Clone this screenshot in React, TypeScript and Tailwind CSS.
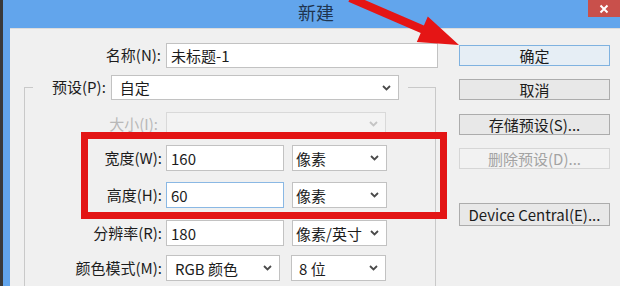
import React from "react";

const FONT = { fontFamily: '"Noto Sans CJK SC", "Noto Sans", sans-serif' };

function Chevron({ disabled }: { disabled?: boolean }) {
  return (
    <svg width="9" height="6" viewBox="0 0 9 6" className="shrink-0">
      <polyline
        points="1,1 4.5,4.5 8,1"
        fill="none"
        stroke={disabled ? "#c4c4c4" : "#4a4a4a"}
        strokeWidth="1.8"
      />
    </svg>
  );
}

function Select({
  text,
  w,
  pl = "pl-[5px]",
  disabled,
}: {
  text: string;
  w: string;
  pl?: string;
  disabled?: boolean;
}) {
  return (
    <div
      className={`${w} h-full flex items-center justify-between ${pl} pr-[7px] border ${
        disabled ? "border-[#d9d9d9] bg-[#f3f3f3]" : "border-[#c2c2c2] bg-white"
      }`}
    >
      <span className="leading-none">{text}</span>
      <Chevron disabled={disabled} />
    </div>
  );
}

function Input({ text, w, focused }: { text: string; w: string; focused?: boolean }) {
  return (
    <div
      className={`${w} h-full flex items-center pl-[4px] bg-white border ${
        focused ? "border-[#8ab8e4]" : "border-[#c2c2c2]"
      }`}
    >
      <span className="leading-none">{text}</span>
    </div>
  );
}

function Button({
  text,
  mt,
  h = "h-[21px]",
  primary,
  disabled,
}: {
  text: string;
  mt: string;
  h?: string;
  primary?: boolean;
  disabled?: boolean;
}) {
  return (
    <div
      className={`${mt} ${h} w-[151px] flex items-center justify-center border ${
        primary
          ? "border-[#7fb2e0] bg-[#e6eef5]"
          : disabled
          ? "border-[#d6d6d6] bg-[#f2f2f2] text-[#a3a3a3]"
          : "border-[#acacac] bg-[#e8e8e8]"
      }`}
    >
      <span className="leading-none">{text}</span>
    </div>
  );
}

export default function App() {
  return (
    <div
      className="w-[620px] h-[286px] overflow-hidden flex bg-[#3a3a3a] text-[15px] text-[#1c1c1c] relative"
      style={FONT}
    >
      <div className="w-[3px] shrink-0 bg-[#3a3a3a]" />
      <div className="flex-1 flex flex-col bg-[#62a5ec]">
        {/* title bar */}
        <div className="h-[28px] shrink-0 flex items-start">
          <span className="ml-[295px] mt-[1px] text-[18px] text-[#1f3550] leading-[22px]">
            新建
          </span>
          <div className="ml-auto w-[32px] h-[17px] bg-[#c9504b] flex items-center justify-center">
            <svg width="10" height="10" viewBox="0 0 10 10">
              <path d="M1.5 1.5 L8.5 8.5 M8.5 1.5 L1.5 8.5" stroke="#ffffff" strokeWidth="2" />
            </svg>
          </div>
        </div>
        {/* content */}
        <div className="flex-1 ml-[7px] bg-[#f0f0f0] border-t border-[#dcdcdc] flex relative">
          {/* left form */}
          <div className="w-[437px] shrink-0 flex flex-col">
            <div className="mt-[14px] h-[25px] flex items-center">
              <span className="w-[152px] text-right pr-[1px]">名称(N):</span>
              <div className="ml-[4px] h-full">
                <Input text="未标题-1" w="w-[272px]" />
              </div>
            </div>
            <fieldset className="mt-[7px] ml-[14px] w-[412px] border border-[#c9c9c9] pl-[8px] pb-[20px]">
              <legend className="pl-[19px] pr-[9px]">
                <div className="h-[25px] flex items-center">
                  <span>预设(P):</span>
                  <div className="ml-[5px] h-full">
                    <Select text="自定" w="w-[288px]" pl="pl-[8px]" />
                  </div>
                </div>
              </legend>
              <div className="mt-[12px] h-[24px] flex items-center">
                <span className="w-[125px] text-right text-[#b8b8b8]">大小(I):</span>
                <div className="ml-[8px] h-full">
                  <Select text="" w="w-[220px]" disabled />
                </div>
              </div>
              <div className="mt-[9px] h-[26px] flex items-center">
                <span className="w-[129px] text-right">宽度(W):</span>
                <div className="ml-[4px] h-full flex gap-[8px]">
                  <Input text="160" w="w-[118px]" />
                  <Select text="像素" w="w-[95px]" pl="pl-[3px]" />
                </div>
              </div>
              <div className="mt-[11px] h-[26px] flex items-center">
                <span className="w-[129px] text-right">高度(H):</span>
                <div className="ml-[4px] h-full flex gap-[8px]">
                  <Input text="60" w="w-[118px]" focused />
                  <Select text="像素" w="w-[95px]" pl="pl-[3px]" />
                </div>
              </div>
              <div className="mt-[12px] h-[26px] flex items-center">
                <span className="w-[129px] text-right">分辨率(R):</span>
                <div className="ml-[4px] h-full flex gap-[8px]">
                  <Input text="180" w="w-[118px]" />
                  <Select text="像素/英寸" w="w-[95px]" pl="pl-[3px]" />
                </div>
              </div>
              <div className="mt-[9px] h-[26px] flex items-center">
                <span className="w-[129px] text-right">颜色模式(M):</span>
                <div className="ml-[4px] h-full flex gap-[11px]">
                  <Select text="RGB 颜色" w="w-[114px]" pl="pl-[8px]" />
                  <Select text="8 位" w="w-[95px]" pl="pl-[7px]" />
                </div>
              </div>
            </fieldset>
          </div>
          {/* right buttons */}
          <div className="ml-[12px] flex flex-col">
            <Button text="确定" mt="mt-[16px]" primary />
            <Button text="取消" mt="mt-[13px]" />
            <Button text="存储预设(S)..." mt="mt-[14px]" />
            <Button text="删除预设(D)..." mt="mt-[13px]" disabled />
            <Button text="Device Central(E)..." mt="mt-[34px]" h="h-[23px]" />
          </div>
          {/* red highlight annotation */}
          <div className="absolute left-[71px] top-[103px] w-[366px] h-[87px] border-[7px] border-[#e31414]" />
        </div>
      </div>
      {/* red arrow annotation */}
      <svg className="absolute left-0 top-0" width="620" height="286" viewBox="0 0 620 286">
        <polygon
          points="351.6,-5.7 423.9,25.5 427.8,16.4 459,45 416.8,42 420.7,32.9 348.4,1.7"
          fill="#e51515"
        />
      </svg>
    </div>
  );
}
